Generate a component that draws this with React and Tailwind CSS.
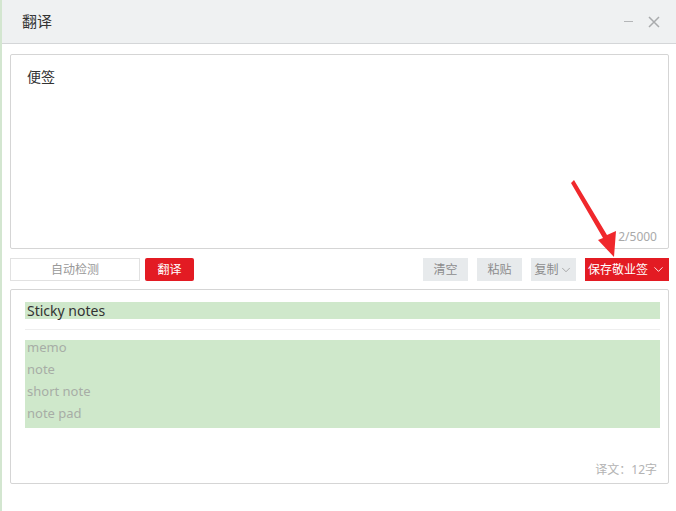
import { ChevronDown } from "lucide-react";

const font = { fontFamily: '"Noto Sans", "Noto Sans CJK SC", sans-serif' };

const synonyms = ["memo", "note", "short note", "note pad"];

export default function App() {
  return (
    <div
      className="relative w-[676px] h-[511px] bg-white border-l-2 border-[#d3e6d0] overflow-hidden text-[#333]"
      style={font}
    >
      {/* title bar */}
      <div className="h-[44px] bg-[#eff1f2] border-b border-[#d4d6d8] flex items-center justify-between pl-[20px] pr-[16px]">
        <span className="text-[15px] text-[#333]">翻译</span>
        <div className="flex items-center gap-[15px]">
          <div className="w-[9px] h-[1.5px] bg-[#b4b6b8]" />
          <svg width="12" height="12" viewBox="0 0 12 12">
            <path d="M1 1 L11 11 M11 1 L1 11" stroke="#a9abad" strokeWidth="1.5" />
          </svg>
        </div>
      </div>

      <div className="pl-[8px] pr-[7px] pt-[10px]">
        {/* source box */}
        <div className="h-[195px] border border-[#d5d5d5] rounded-[2px] flex flex-col justify-between pl-[16px] pr-[11px] pt-[11px] pb-[2px]">
          <span className="text-[14px] text-[#333]">便签</span>
          <span className="self-end text-[12px] text-[#a9a9a9]">2/5000</span>
        </div>

        {/* toolbar */}
        <div className="flex items-center justify-between mt-[9px] h-[23px]">
          <div className="flex items-center gap-[5px] h-full">
            <div className="w-[130px] h-full border border-[#e1e1e1] flex items-center justify-center text-[12px] text-[#999]">
              自动检测
            </div>
            <div className="w-[49px] h-full bg-[#e31b23] rounded-[2px] flex items-center justify-center text-[12px] text-white">
              翻译
            </div>
          </div>
          <div className="flex items-center gap-[9px] h-full">
            <div className="w-[45px] h-full bg-[#e7eaec] flex items-center justify-center text-[12px] text-[#8c8c8c]">
              清空
            </div>
            <div className="w-[45px] h-full bg-[#e7eaec] flex items-center justify-center text-[12px] text-[#8c8c8c]">
              粘贴
            </div>
            <div className="w-[45px] h-full bg-[#e7eaec] flex items-center justify-center text-[12px] text-[#8c8c8c]">
              复制
              <ChevronDown className="w-[14px] h-[14px]" strokeWidth={1.2} />
            </div>
            <div className="w-[84px] h-full bg-[#e31b23] flex items-center justify-center gap-[3px] text-[12px] text-white">
              保存敬业签
              <ChevronDown className="w-[15px] h-[15px]" strokeWidth={1.4} />
            </div>
          </div>
        </div>

        {/* result box */}
        <div className="mt-[8px] h-[195px] border border-[#d5d5d5] rounded-[2px] flex flex-col pl-[14px] pr-[8px] pt-[12px] pb-[4px]">
          <div className="h-[17px] bg-[#cfe8cb] flex items-center pl-[2px] text-[14px] text-[#333]">
            Sticky notes
          </div>
          <div className="h-[1px] bg-[#eeeeee] mt-[10px]" />
          <div className="mt-[10px] bg-[#cfe8cb] flex flex-col">
            {synonyms.map((s) => (
              <span key={s} className="h-[22px] leading-[15px] pl-[2px] text-[13px] text-[#a7ada6]">
                {s}
              </span>
            ))}
          </div>
          <span className="mt-auto self-end pr-[3px] text-[12px] text-[#b3b3b3]">译文：12字</span>
        </div>
      </div>

      {/* annotation arrow */}
      <svg className="absolute left-0 top-0 pointer-events-none" width="676" height="511">
        <polygon points="569,183 572,180 605,235 614,231 612,257 596,240 601,238" fill="#f0282c" />
      </svg>
    </div>
  );
}
